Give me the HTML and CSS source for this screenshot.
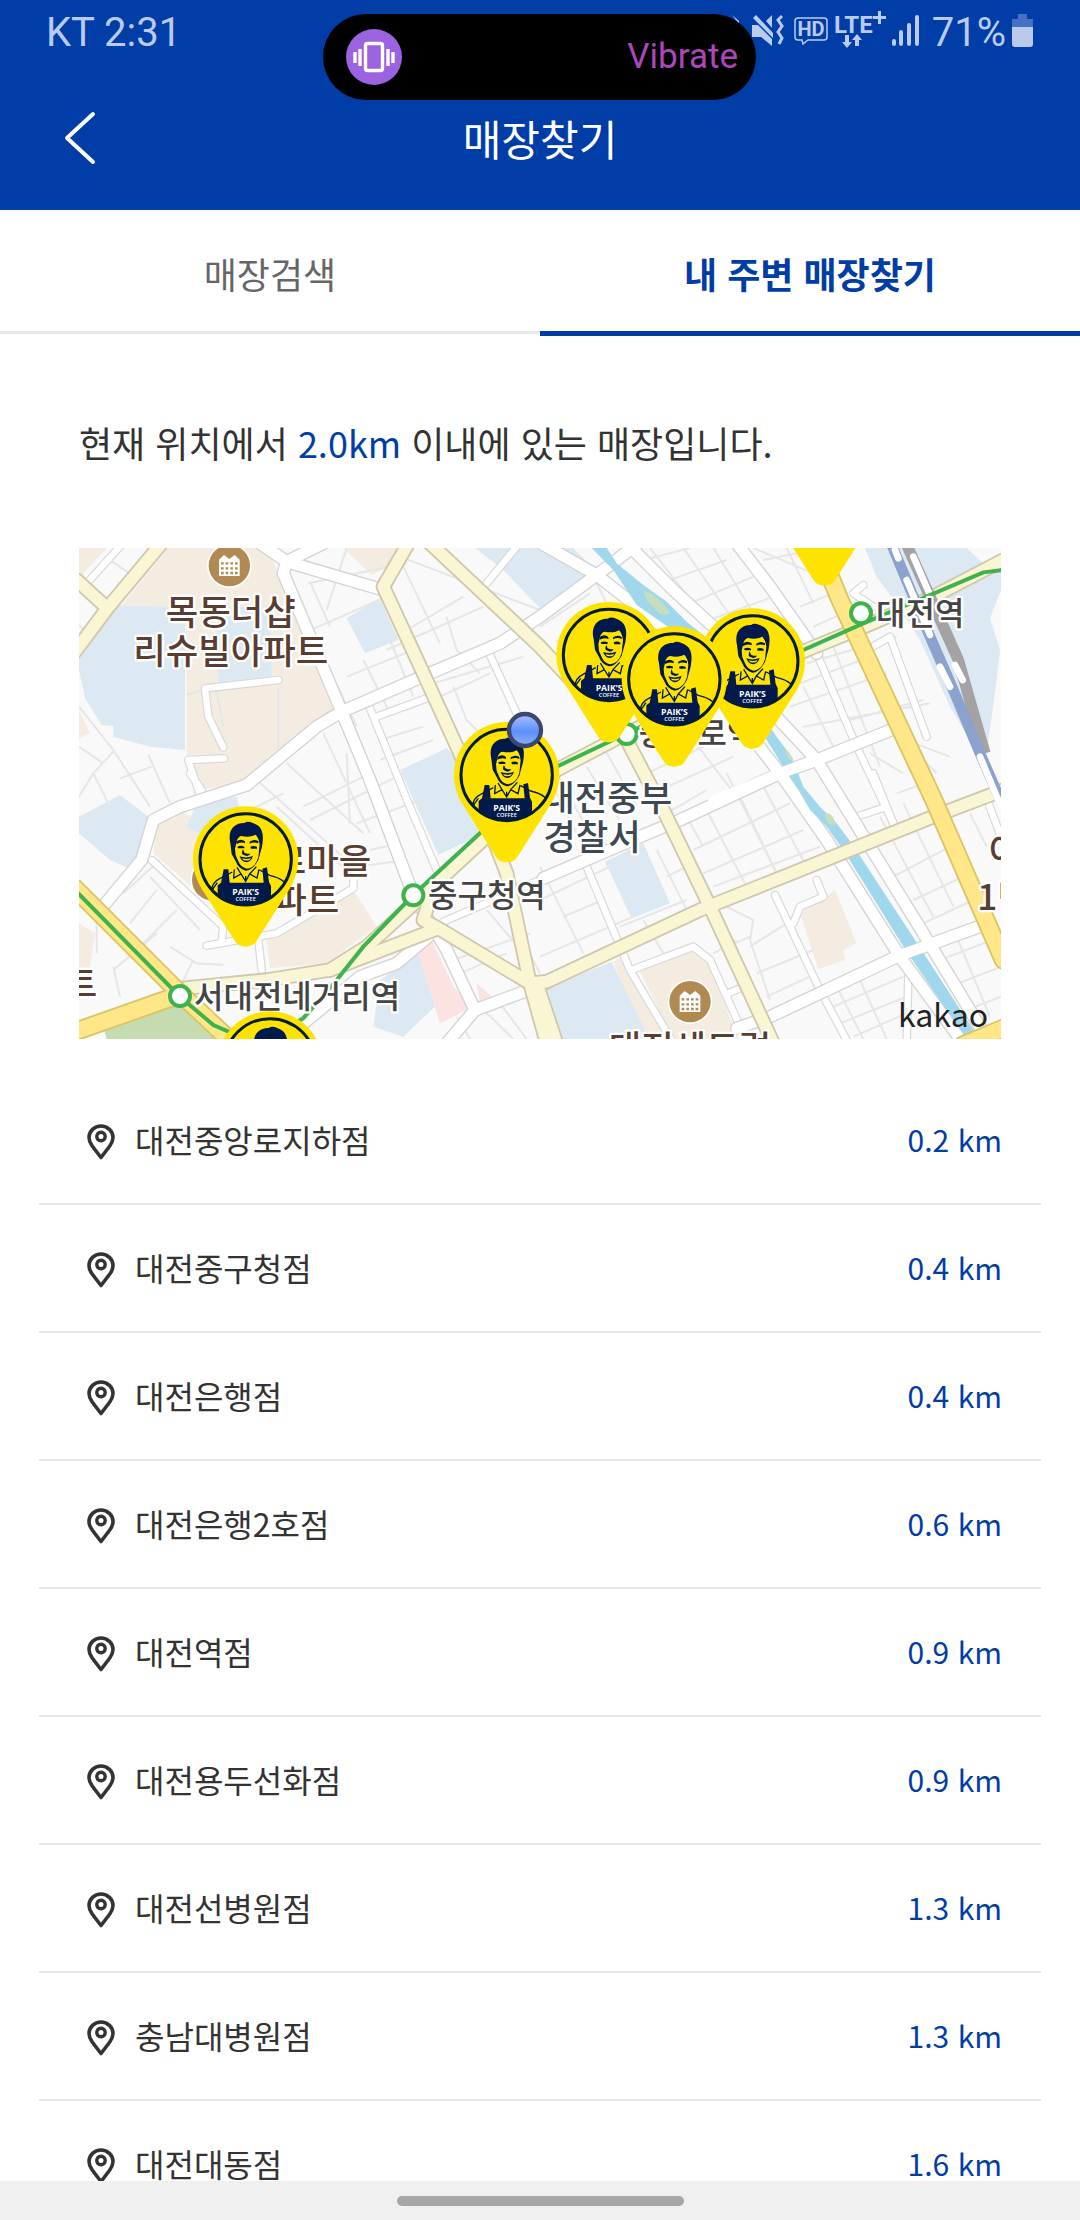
FILE: index.html
```html
<!DOCTYPE html>
<html lang="ko">
<head>
<meta charset="utf-8">
<meta name="viewport" content="width=device-width, initial-scale=1">
<title>매장찾기</title>
<link rel="stylesheet" href="styles.css">
</head>
<body>
<svg class="sprite" aria-hidden="true">
  <symbol id="icon-pin" viewBox="0 0 28 36">
    <path d="M14 2C7.400 2 2 7.200 2 13.600c0 3.200 1.300 5.800 3.200 8.400L14 33.500 22.800 22c1.900-2.600 3.200-5.200 3.200-8.400C26 7.200 20.600 2 14 2z" fill="none" stroke="#333" stroke-width="3.600" stroke-linejoin="round"/>
    <circle cx="14" cy="12.500" r="4.200" fill="none" stroke="#333" stroke-width="3.400"/>
  </symbol>
</svg>

<header class="top">
  <div class="status">
    <span>KT 2:31</span>
    <div class="status-icons">
      <svg class="mute" width="54" height="40" viewBox="730 10 54 40" fill="#b9cbef">
        <path d="M732 15l7 6v3z"/>
        <path d="M752 25h6l14 14v7l-11-9h-9zM772 15v13l-6-7zM753 18l3-3 17 18v5z"/>
        <path d="M782 16l-4 4 4 6-4 6 4 6-3 6" fill="none" stroke="#b9cbef" stroke-width="3"/>
      </svg>
      <svg width="34" height="40" viewBox="794 10 34 40">
        <path d="M798 18h26q3 0 3 3v16q0 3-3 3h-16l-5 4-1-4h-4q-3 0-3-3V21q0-3 3-3z" fill="none" stroke="#b9cbef" stroke-width="1.500"/>
        <text class="glyph-label" x="811" y="36" font-size="20" text-anchor="middle">HD</text>
      </svg>
      <svg width="52" height="40" viewBox="834 10 52 40" fill="#b9cbef">
        <text class="glyph-label" x="834" y="33" font-size="24">LTE</text>
        <path d="M878 11h3v5h5v3h-5v5h-3v-5h-5v-3h5zM845 35h4v7h3l-5 6-5-6h3zM855 46v-6h-3l5-6 5 6h-3v6z"/>
      </svg>
      <svg width="28" height="40" viewBox="893 10 28 40" fill="none" stroke="#b9cbef" stroke-width="4" stroke-linecap="round">
        <path d="M895 41v3M902 32v12M910 25v19M918 17v27"/>
      </svg>
      <span class="battery-text">71%</span>
      <svg width="21" height="40" viewBox="1012 10 21 40">
        <path d="M1018 14h9v5h6v8h-21v-8h6z" fill="#4671c2"/>
        <path d="M1012 27h21v17q0 3-3 3h-15q-3 0-3-3z" fill="#b9cbe9"/>
      </svg>
    </div>
    <div class="island">
      <svg width="56" height="56" viewBox="0 0 56 56">
        <circle cx="28" cy="28" r="28" fill="#9b63e0"/>
        <rect x="19.500" y="14.500" width="17" height="27" rx="2" fill="none" stroke="#fff" stroke-width="3.400"/>
        <path d="M14 20v17M9 23v11M42 20v17M47 23v11" stroke="#fff" stroke-width="3.400"/>
      </svg>
      <span>Vibrate</span>
    </div>
  </div>
  <div class="appbar">
    <button class="back" type="button" aria-label="뒤로">
      <svg width="32" height="54" viewBox="0 0 32 54"><path d="M29 3L3 27l26 24" fill="none" stroke="#fff" stroke-width="4" stroke-linecap="round" stroke-linejoin="round"/></svg>
    </button>
    <h1>매장찾기</h1>
  </div>
</header>

<nav class="tabs">
  <button class="tab" type="button">매장검색</button>
  <button class="tab active" type="button">내 주변 매장찾기</button>
</nav>

<main>
  <p class="notice">현재 위치에서 <strong>2.0km</strong> 이내에 있는 매장입니다.</p>

  <svg class="map" viewBox="27 24 2766 1473" role="img" aria-label="주변 매장 지도">
    <defs>
      <linearGradient id="dot" x1="0" y1="0" x2="0" y2="1">
        <stop offset="0" stop-color="#a9c2fb"/><stop offset=".55" stop-color="#5c90fb"/><stop offset="1" stop-color="#8db2fd"/>
      </linearGradient>
      <g id="roads">
        <path d="M570 10L650 65 640 100 815 515 900 720 1030 1065 1130 1230 1215 1410 1130 1510M650 65L760 10M650 65L940 150"/>
        <path d="M90 1110L215 960 250 840 330 800 530 735 740 560 815 515 1080 400 1290 310 1410 230 1580 105 1700 14"/>
        <path d="M1420 14L1580 105 1790 270 2060 610 2130 700 2270 900 2490 1250 2680 1510"/>
        <path d="M1690 30L1810 150 1930 260 2100 510 2240 660 2320 790 2560 1180 2760 1510"/>
        <path d="M2000 10L2100 140 2240 340"/>
        <path d="M2470 567L2240 660 2130 700 1830 840 1710 890 1420 1015"/>
        <path d="M2000 1465L2100 1430 2270 1350 2480 1250 2740 1155"/>
        <path d="M700 1450L870 1310 980 1270 1075 1190M1215 1410L1430 1330"/>
      </g>
      <g id="lanes">
        <path d="M155 14L50 130M1345 14L1250 130M900 505L1010 777 1100 990M1260 345L1340 520M920 530L1070 475M2240 340L2360 620 2470 850M2460 290L2570 590M2460 290L2400 325M2380 135L2350 160 2410 200"/>
        <path d="M625 420L405 445 415 530 460 622M462 655L355 660 385 750 390 770M360 700L395 750"/>
        <path d="M245 960L460 1160 455 1200M410 1217L620 1180 850 1045 850 1020M565 1200L575 1290M1120 1145L1410 1020"/>
        <path d="M1550 980L1680 1290 1810 1510M1690 1288L1870 1220 1920 1260 2015 1470M1975 1360L2010 1345"/>
        <path d="M2115 1065L2250 1350 2335 1510M2170 1150L2190 1100 2260 1070 2240 1020M2360 830L2450 800M2515 1310L2510 1510M2755 790L2793 890M2410 700L2470 850"/>
      </g>
      <g id="avenues">
        <path d="M275 10L112 205 15 335M20 120L112 205"/>
        <path d="M1015 10L940 140 1060 400 1170 640 1310 1000 1380 1330 1430 1510"/>
        <path d="M1080 10L1410 320 1560 480 1670 600 1780 810 1920 1100 2110 1510"/>
        <path d="M2800 60L2580 175 2370 265 2210 330 1660 585 1460 690 1260 880 1060 1065 890 1220 780 1290 590 1320 340 1345"/>
        <path d="M780 1290L1105 1165 1380 1330 1430 1325 1890 1110 2590 830 2800 750M1105 1165L1060 1140 1085 1060M1400 1330L1460 1510"/>
      </g>
      <g id="trunk">
        <path d="M2260 60L2310 180 2590 777 2800 1260M15 1045L330 1360 490 1510M15 1475L270 1385 330 1365M2680 1515L2800 1465"/>
      </g>
      <g id="poi">
        <circle r="67" fill="#fff"/><circle r="62" fill="#b08a52"/>
        <path d="M-31 31V-18L-16-32 0-20 16-32 31-18V31z" fill="#fff"/>
        <path d="M-25-7H25M-25 8H25M-25 22H25" stroke="#b08a52" stroke-width="7" stroke-dasharray="8 6"/>
      </g>
      <clipPath id="badge"><circle r="137"/></clipPath>
      <g id="marker">
        <path d="M-158-1A158 158 0 1 1 158-1C158 32 148 60 132 88L32 246Q22 262 0 262-22 262-32 246L-132 88C-148 60-158 32-158-1z" fill="#ffe300"/>
        <g clip-path="url(#badge)">
          <path d="M-103 95Q-100 68-78 58L-40 38M116 68Q100 54 72 48L42 32M-103 95L-85 70M-34 30L-36 56-14 44 0 66 12 44 34 56 40 30M-14 44L-26 24M12 44L32 22M0 50V66" fill="none" stroke="#021a4b" stroke-width="4"/>
          <path d="M-84 150V78L-74 70-66 30H-52L-48 70H54L50 28 64 24 70 68 76 80V150z" fill="#021a4b"/>
          <path d="M-46-48C-56-92-30-110-4-109 8-118 22-108 30-105 54-94 54-66 49-38L44-20 38 2Q20 34 0 34-22 28-30 6L-42-16z" fill="#021a4b"/>
          <path d="M-26-58Q-20-70-12-70 4-66 20-70L30-74Q40-64 42-44L38-6Q28 26 4 28-14 26-22 6L-30-12-32-32z" fill="#ffe300"/>
          <path d="M-28-54Q-14-64-2-54V-48Q-14-54-28-46zM12-53Q26-62 38-54V-48Q24-54 12-47zM-25-38Q-14-43-4-38V-33H-23zM14-38Q24-43 34-37V-32H16zM-8-30Q-14-18-8-14L3-10Q12-12 14-17L4-17-4-20zM-18-9Q0-2 22-10 16 8 2 9-12 8-18-9z" fill="#021a4b"/>
          <path d="M-11-3Q3 2 16-4L12 2Q2 5-7 2z" fill="#ffe300"/>
          <text class="brand" y="108" font-size="26">PAIK’S</text>
          <text class="brand brand-sub" y="126" font-size="17">COFFEE</text>
        </g>
        <circle r="137" fill="none" stroke="#031c32" stroke-width="9"/>
      </g>
    </defs>

    <rect x="27" y="24" width="2766" height="1473" fill="#f9f9f9"/>

    <g fill="#f4ece1">
      <path d="M27 24H110L27 115zM295 24H590L630 110 790 510 735 550 530 730 395 748 350 650V440L345 200 155 195zM27 510L60 580 27 595zM820 24H990L975 70 905 105zM265 820L345 815 430 900 410 1080 250 940zM590 1200L850 1050 920 1160 770 1270 600 1285zM27 1150L75 1180 60 1280 27 1285z"/>
      <path d="M1630 1265L1670 1240 1790 1497H1720zM1710 1295L1870 1230 1920 1280 2005 1497H1810zM2190 1120L2295 1050 2360 1210 2320 1230 2325 1260 2245 1288z"/>
    </g>
    <g fill="#dce9f2">
      <path d="M120 195L345 200V630L240 620 130 590V558L95 555 45 475 27 390V340zM440 200H600L605 410 445 430zM830 235L930 175 985 300 885 340zM1215 24H1510L1575 90 1410 205 1300 90zM990 690L1130 625 1300 800 1240 880 1105 945z"/>
      <path d="M27 830L150 765 235 830 200 995 120 960 27 880zM350 860L380 790 500 770 530 900 420 900zM930 1320L1045 1240 1095 1400 1000 1490 910 1460zM1605 965L1720 910 1800 1090 1685 1135zM1415 1350L1625 1265 1710 1440 1735 1497H1470z"/>
      <path d="M2385 24H2690L2755 85 2793 75V150L2760 235 2790 330 2780 420 2750 640 2730 650 2640 500 2550 300 2480 190 2420 110z"/>
    </g>
    <path d="M100 1460L300 1380 420 1450 460 1497H110z" fill="#c5dcb1"/>
    <path d="M1045 1240L1085 1200 1150 1340 1210 1400 1110 1450zM1220 1330L1265 1370 1230 1385z" fill="#fae3e1"/>

    <g class="paths">
      <path d="M27 500L130 630 240 800M130 635L70 700 27 770M70 700L120 800M235 645L300 790M150 715L245 680M27 620L100 670M120 60L200 115M625 440V640M440 455L460 560M350 465L400 450M27 255L50 280"/>
      <path d="M680 180L860 560M715 130L1010 70M720 125L780 260M830 24L770 210M700 280L960 165M990 50L1410 210M1000 80L1110 310M1180 170L960 300M1130 230L1160 330 1230 400M1240 200L950 330M830 410L1030 330M860 490L1100 380M880 360L960 520M960 300L1030 470M1090 430L1360 350M1150 440L1190 540 1250 600M1110 470L1260 400"/>
      <path d="M650 670L880 880M560 720L830 960M760 580L900 880M700 800L900 700M830 640L840 850M720 840L1000 700M860 850L1050 780M500 830L640 760M620 800L840 1000M900 930L990 910M860 980L1010 960M930 600L1060 560M930 660L1090 600"/>
      <path d="M110 1120L310 1350M80 1140L80 1240M130 1290L260 1180M200 1230L320 1110M260 1050L180 1150M300 1220L380 1270 460 1275M330 1340L370 1260M160 1060L270 960M400 1330L600 1350M240 1010L390 1170M130 1280L150 1370"/>
      <path d="M1150 1260L1380 1180M1170 1300L1310 1240M1250 1110L1380 1260M1230 1400L1330 1497M1290 1390L1370 1497M1160 1430L1200 1497M1330 1150L1410 1300M1410 980L1540 1240M1410 1080L1620 980M1480 1130L1600 1080M1410 1250L1690 1130M1640 860L1710 1000M1460 760L1560 960"/>
      <path d="M1580 130L1640 250M1410 260L1560 160M1420 320L1500 430M1460 300L1570 410M1720 60L1860 24M1770 130L1970 60M1860 190L2050 110M1890 250L2110 170M1740 24L1900 230M1840 24L2010 270M1930 24L2050 220M2050 24L2300 130M2150 24L2230 190M2080 60L2260 24M2190 200L2290 160M2230 260L2320 220"/>
      <path d="M2210 370L2480 290M2190 430L2400 350M2160 500L2450 400M2200 560L2580 490M2290 320L2430 680M2200 440L2300 640M2480 590L2640 650M2500 600L2600 700M2400 640L2500 700M2340 540L2560 480"/>
      <path d="M1460 700L1570 900M1550 680L1660 860M1600 620L1700 800M1730 700L1900 620M1750 760L1990 650M1790 820L1910 750M1870 600L2000 770M1970 700L2120 1000M1850 830L1900 920M1910 810L2040 1060M2010 770L2130 1020M2080 740L2210 980M1870 930L2160 790M1900 1000L2200 870M1930 1040L2250 920M1760 930L1860 1130M1790 1010L1850 980M1650 1160L1850 1080M1720 1140L1780 1240"/>
      <path d="M1970 1100L2050 1140 2040 1200 2100 1380M1970 1220L2040 1190M2040 1220L2150 1150M2060 1300L2230 1230M2090 1370L2240 1300M1930 1240L2000 1200M2300 1340L2380 1497M2370 1320L2450 1497M2290 1400L2500 1310M2310 1450L2510 1370M2350 1490L2510 1420M2430 830L2590 1130M2500 790L2650 1100M2470 1010L2640 920M2530 1080L2680 1010M2560 1150L2710 1080M2610 1260L2793 1190M2640 1340L2793 1280M2660 1190L2760 1430M2480 760L2590 720M2700 820L2750 920M2690 1410L2793 1370"/>
    </g>

    <use href="#lanes" class="lane-edge"/><use href="#lanes" class="lane-fill"/>
    <use href="#roads" class="road-edge"/><use href="#roads" class="road-fill"/>
    <g fill="#a1d7ec">
      <path d="M1565 24H1610L1640 70 1720 135 1790 185 1850 245 1930 310 2120 590 2165 650 2200 740 2250 800 2300 850 2345 910 2545 1215 2720 1485 2690 1497 2510 1235 2320 930 2270 860 2220 810 2180 740 2140 680 2090 600 1900 340 1800 265 1700 195 1670 150 1630 90z"/>
    </g>
    <path d="M1720 152Q1765 165 1800 218 1795 228 1772 222 1730 190 1720 152zM2265 820q25-5 32 35-30 5-32-35zM2145 628q15 5 28 40-20-5-28-40z" fill="#c5dfbc"/>
    <path class="road-fill" d="M1930 785L2130 700 2240 660 2470 567M2270 1350L2480 1250 2740 1155"/>
    <use href="#avenues" class="avenue-edge"/><use href="#avenues" class="avenue-fill"/>
    <use href="#trunk" class="trunk-edge"/><use href="#trunk" class="trunk-fill"/>

    <g class="rail">
      <path d="M2510 14L2665 360 2745 640" stroke="#a3a3a3" stroke-width="34"/>
      <path d="M2530 50L2580 165M2655 375L2678 420" stroke="#fff" stroke-width="20" stroke-linecap="round"/>
      <path d="M2465 14L2580 290 2650 450 2730 640 2800 800" stroke="#8ba2cf" stroke-width="32"/>
      <path d="M2475 30L2485 55M2510 120L2580 285M2610 380L2640 440M2730 650L2793 800" stroke="#fff" stroke-width="20" stroke-linecap="round"/>
    </g>
    <g class="subway">
      <path d="M20 1055L330 1370 430 1455 510 1490M2800 90L2740 97 2380 250 2200 330 1660 585 1460 680 1240 870 1030 1065 880 1220 800 1320 700 1435 600 1497" fill="none"/>
      <circle cx="2373" cy="220" r="30"/><circle cx="1670" cy="582" r="30"/><circle cx="1030" cy="1066" r="30"/><circle cx="330" cy="1368" r="30"/>
    </g>

    <use href="#poi" x="478" y="77"/><use href="#poi" x="1860" y="1385"/><use href="#poi" x="428" y="1020"/>

    <g class="label label-home">
      <text x="482" y="254" text-anchor="middle">목동더샵</text>
      <text x="482" y="372" text-anchor="middle">리슈빌아파트</text>
      <text x="904" y="1001" text-anchor="end">로마을</text>
      <text x="808" y="1120" text-anchor="end">파트</text>
      <text x="82" y="1371" text-anchor="end">트</text>
      <text x="1860" y="1562" text-anchor="middle">대전센트럴</text>
      <text x="2755" y="972">이</text>
      <text x="2722" y="1111">1번</text>
    </g>
    <g class="label label-office">
      <text x="1417" y="812">대전중부</text>
      <text x="1420" y="931">경찰서</text>
    </g>
    <g class="label label-station">
      <text x="2418" y="256">대전역</text>
      <text x="1706" y="615">중앙로역</text>
      <text x="1074" y="1102">중구청역</text>
      <text x="372" y="1405">서대전네거리역</text>
    </g>

    <use href="#marker" x="2263" y="-125"/>
    <use href="#marker" x="1617" y="345"/>
    <use href="#marker" x="2047" y="364"/>
    <use href="#marker" x="1813" y="418"/>
    <use href="#marker" x="1310" y="705"/>
    <use href="#marker" x="527" y="958"/>
    <use href="#marker" x="600" y="1573"/>
    <circle cx="1365" cy="570" r="48" fill="url(#dot)" stroke="#3d466f" stroke-width="13"/>
    <text class="kakao" x="2484" y="1460">kakao</text>
  </svg>

  <ul class="stores">
    <li><a href="#"><svg class="pin"><use href="#icon-pin"/></svg><span class="name">대전중앙로지하점</span><span class="distance">0.2 km</span></a></li>
    <li><a href="#"><svg class="pin"><use href="#icon-pin"/></svg><span class="name">대전중구청점</span><span class="distance">0.4 km</span></a></li>
    <li><a href="#"><svg class="pin"><use href="#icon-pin"/></svg><span class="name">대전은행점</span><span class="distance">0.4 km</span></a></li>
    <li><a href="#"><svg class="pin"><use href="#icon-pin"/></svg><span class="name">대전은행2호점</span><span class="distance">0.6 km</span></a></li>
    <li><a href="#"><svg class="pin"><use href="#icon-pin"/></svg><span class="name">대전역점</span><span class="distance">0.9 km</span></a></li>
    <li><a href="#"><svg class="pin"><use href="#icon-pin"/></svg><span class="name">대전용두선화점</span><span class="distance">0.9 km</span></a></li>
    <li><a href="#"><svg class="pin"><use href="#icon-pin"/></svg><span class="name">대전선병원점</span><span class="distance">1.3 km</span></a></li>
    <li><a href="#"><svg class="pin"><use href="#icon-pin"/></svg><span class="name">충남대병원점</span><span class="distance">1.3 km</span></a></li>
    <li><a href="#"><svg class="pin"><use href="#icon-pin"/></svg><span class="name">대전대동점</span><span class="distance">1.6 km</span></a></li>
  </ul>
</main>

<footer class="gesture-bar"><span class="handle"></span></footer>
</body>
</html>
```
FILE: styles.css
```css
* { box-sizing: border-box; }

body {
  display: flex;
  flex-direction: column;
  height: 100vh;
  margin: 0;
  background: #fff;
  color: #333;
  font-family: "Noto Sans CJK KR", "Noto Sans", sans-serif;
}

button {
  padding: 0;
  border: 0;
  background: none;
  font: inherit;
  cursor: pointer;
}

svg { display: block; flex: none; }

.sprite { position: absolute; width: 0; height: 0; }

/* Header */
.top { flex: none; background: #003da6; }

.status {
  position: relative;
  display: flex;
  align-items: center;
  justify-content: space-between;
  height: 66px;
  padding: 0 47px 0 46px;
  color: #b9cbef;
  font: 40px/66px Roboto, sans-serif;
}

.status-icons { display: flex; align-items: center; gap: 6px; }
.status-icons svg { align-self: flex-start; margin-top: 10px; }
.mute { margin-right: 4px; }
.battery-text { margin-left: 6px; }

.glyph-label {
  fill: #b9cbef;
  font-family: Roboto, sans-serif;
  font-weight: 700;
}

.island {
  position: absolute;
  top: 14px;
  left: 50%;
  display: flex;
  align-items: center;
  justify-content: space-between;
  width: 433px;
  height: 86px;
  margin-left: -217px;
  padding: 0 18px 0 23px;
  border-radius: 43px;
  background: #000;
  color: #ab47bc;
  font-size: 35px;
}

.appbar {
  display: grid;
  grid-template-columns: 96px 1fr 96px;
  align-items: center;
  height: 144px;
}

.back { display: flex; justify-content: flex-end; }

h1 {
  margin: 0;
  color: #fff;
  font-size: 42px;
  font-weight: 400;
  line-height: 60px;
  text-align: center;
}

/* Tabs */
.tabs { display: flex; flex: none; height: 126px; }

.tab {
  flex: 1;
  align-self: flex-start;
  height: 124px;
  padding-top: 4px;
  border-bottom: 3px solid #e8e8e8;
  color: #666;
  font-size: 36px;
}

.tab.active {
  height: 126px;
  border-bottom: 5px solid #003da6;
  color: #003da6;
  font-weight: 700;
}

/* Content */
main {
  flex: 1;
  min-height: 0;
  overflow-y: auto;
  scrollbar-width: none;
}

.notice {
  margin: 0;
  padding: 80px 79px;
  font-size: 36px;
  line-height: 52px;
}

.notice strong { color: #003da6; font-weight: 400; }

.map { width: calc(100% - 158px); margin: 0 79px 38px; }

.stores { margin: 0 39px; padding: 0; list-style: none; }
.stores li { border-bottom: 2px solid #e8e8e8; }

.stores a {
  display: flex;
  align-items: center;
  height: 126px;
  padding: 0 39px 0 48px;
  color: #333;
  font-size: 32px;
  line-height: 48px;
  text-decoration: none;
}

.pin { width: 28px; height: 36px; margin-top: 4px; }
.name { flex: 1; margin-left: 20px; padding-bottom: 2px; }
.distance { padding-bottom: 2px; color: #003da6; font-size: 30px; }

.gesture-bar {
  display: flex;
  flex: none;
  align-items: center;
  justify-content: center;
  height: 39px;
  background: #f0f0f0;
}

.handle { width: 287px; height: 10px; border-radius: 5px; background: #a6a6a6; }

/* Map */
.paths { fill: none; stroke: #e6e6e6; stroke-width: 6px; }

.lane-edge, .lane-fill, .road-edge, .road-fill,
.avenue-edge, .avenue-fill, .trunk-edge, .trunk-fill {
  fill: none;
  stroke-linejoin: round;
  stroke-linecap: round;
}

.lane-edge { stroke: #d8d8d8; stroke-width: 26px; }
.lane-fill { stroke: #fff; stroke-width: 19px; }
.road-edge { stroke: #d3d3d3; stroke-width: 41px; }
.road-fill { stroke: #fff; stroke-width: 33px; }
.avenue-edge { stroke: #d0c8ad; stroke-width: 46px; }
.avenue-fill { stroke: #faf5d3; stroke-width: 35px; }
.trunk-edge { stroke: #d9c566; stroke-width: 58px; }
.trunk-fill { stroke: #ffe789; stroke-width: 47px; }
.rail { fill: none; }
.subway { fill: #fff; stroke: #3eb24c; stroke-width: 12px; }

.label {
  font-weight: 500;
  stroke: #fff;
  stroke-width: 14px;
  stroke-linejoin: round;
  paint-order: stroke;
}

.label-home { fill: #593d30; font-size: 106px; }
.label-office { fill: #3c4952; font-size: 106px; }
.label-station { fill: #444; font-size: 96px; }

.brand {
  fill: #fff;
  font-family: "Open Sans", sans-serif;
  font-weight: 700;
  text-anchor: middle;
}

.brand-sub { font-weight: 600; }
.kakao { fill: #222; font-size: 96px; }
```
